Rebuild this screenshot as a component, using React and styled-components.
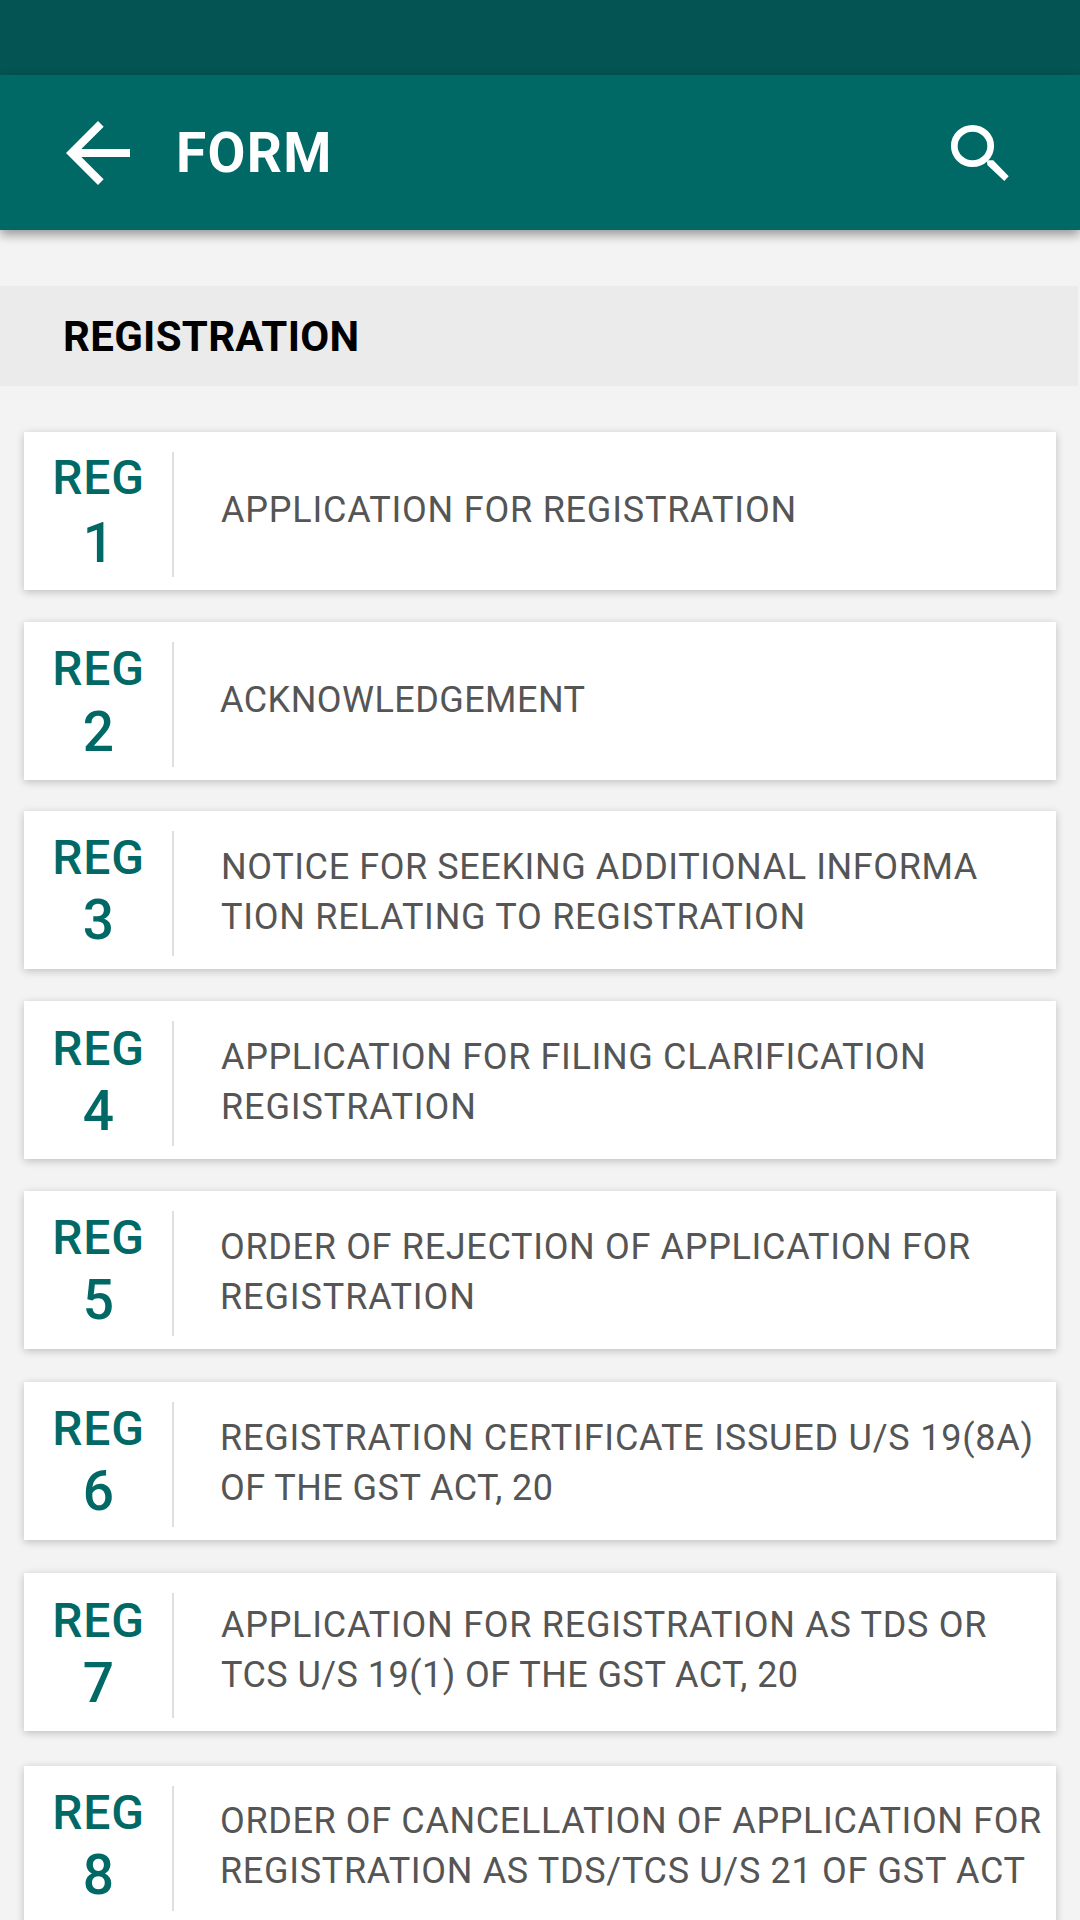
import React from "react";
import styled, { createGlobalStyle } from "styled-components";

const TEAL = "#006966";

const GlobalStyle = createGlobalStyle`
  html, body { margin: 0; background: #f3f3f3; }
  * { box-sizing: border-box; }
`;

const Screen = styled.div`
  width: 1080px;
  height: 1920px;
  overflow: hidden;
  display: flex;
  flex-direction: column;
  background: #f3f3f3;
  font-family: Roboto, "Liberation Sans", sans-serif;
`;

const StatusBar = styled.div`
  flex: none;
  height: 75px;
  background: #035452;
`;

const AppBar = styled.header`
  flex: none;
  display: flex;
  align-items: center;
  height: 155px;
  padding: 1px 61px 0 50px;
  background: ${TEAL};
  color: #fff;
  box-shadow: 0 5px 10px rgba(0, 0, 0, 0.37);
`;

const IconButton = styled.button`
  display: flex;
  padding: 0;
  border: 0;
  background: none;
  color: inherit;
`;

const Title = styled.h1`
  flex: 1;
  margin: 0 0 0 30px;
  font-size: 55px;
  font-weight: 700;
  line-height: 64px;
  letter-spacing: 1.3px;
`;

const SectionHeader = styled.h2`
  flex: none;
  width: 1078px;
  height: 100px;
  margin: 56px 0 46px;
  padding: 26px 0 0 63px;
  background: #ebebeb;
  color: #000;
  font-size: 42px;
  font-weight: 700;
  line-height: 49px;
  letter-spacing: 0.3px;
`;

const FormList = styled.ul`
  margin: 0;
  padding: 0 24px;
  list-style: none;
`;

const Card = styled.li`
  display: flex;
  height: 158px;
  margin-bottom: ${(p) => p.$gap}px;
  background: #fff;
  box-shadow: 0 2px 8px rgba(0, 0, 0, 0.22);
`;

const Code = styled.div`
  width: 148px;
  padding-top: ${(p) => p.$top}px;
  padding-left: 1px;
  display: flex;
  flex-direction: column;
  align-items: center;
  gap: ${(p) => p.$gap}px;
  color: ${TEAL};
  font-weight: 500;
`;

const Prefix = styled.span`
  font-size: 48px;
  line-height: 57px;
  letter-spacing: 0.8px;
`;

const Number = styled.span`
  font-size: 55px;
  line-height: 64px;
`;

const Divider = styled.div`
  width: 2px;
  height: 125px;
  margin-top: 20px;
  background: #dfdfdf;
`;

const Description = styled.div`
  padding-top: ${(p) => p.$top}px;
  padding-left: ${(p) => p.$indent}px;
`;

const Line = styled.div`
  height: 50px;
  color: #555;
  font-size: 36px;
  line-height: 50px;
  letter-spacing: ${(p) => p.$tracking}px;
  white-space: nowrap;
`;

const forms = [
  { gap: 32, codeTop: 17, codeGap: 5, top: 53, indent: 47, lines: [["APPLICATION FOR REGISTRATION", 0.78]] },
  { gap: 31, codeTop: 18, codeGap: 3, top: 53, indent: 46, lines: [["ACKNOWLEDGEMENT", 0.45]] },
  { gap: 32, codeTop: 18, codeGap: 2, top: 31, indent: 47, lines: [["NOTICE FOR SEEKING ADDITIONAL INFORMA", 0.59], ["TION RELATING TO REGISTRATION", 0.74]] },
  { gap: 32, codeTop: 19, codeGap: 2, top: 31, indent: 47, lines: [["APPLICATION FOR FILING CLARIFICATION", 0.65], ["REGISTRATION", 0.9]] },
  { gap: 33, codeTop: 18, codeGap: 2, top: 31, indent: 46, lines: [["ORDER OF REJECTION OF APPLICATION FOR", 0.67], ["REGISTRATION", 0.9]] },
  { gap: 33, codeTop: 18, codeGap: 2, top: 31, indent: 46, lines: [["REGISTRATION CERTIFICATE ISSUED U/S 19(8A)", 0.77], ["OF THE GST ACT, 20", 0.45]] },
  { gap: 35, codeTop: 19, codeGap: 2, top: 27, indent: 47, lines: [["APPLICATION FOR REGISTRATION AS TDS OR", 0.73], ["TCS U/S 19(1) OF THE GST ACT, 20", 0.45]] },
  { gap: 0, codeTop: 18, codeGap: 2, top: 30, indent: 46, lines: [["ORDER OF CANCELLATION OF APPLICATION FOR", 0.62], ["REGISTRATION AS TDS/TCS U/S 21 OF GST ACT", 0.68]] },
];

const BackIcon = () => (
  <svg width="96" height="96" viewBox="0 0 24 24" fill="currentColor" aria-hidden="true">
    <path d="M20 11H7.83l5.59-5.59L12 4l-8 8 8 8 1.41-1.41L7.83 13H20v-2z" />
  </svg>
);

const SearchIcon = () => (
  <svg width="76" height="76" viewBox="0 0 76 76" aria-hidden="true">
    <ellipse cx="29.5" cy="31" rx="18.2" ry="17.7" fill="none" stroke="currentColor" strokeWidth="6.7" />
    <path d="M44 45.6L46.2 45.2H50.2L65.7 61.2L61.3 66L44.3 50Z" fill="currentColor" />
  </svg>
);

export default function App() {
  return (
    <Screen>
      <GlobalStyle />
      <StatusBar />
      <AppBar>
        <IconButton aria-label="Back"><BackIcon /></IconButton>
        <Title>FORM</Title>
        <IconButton aria-label="Search"><SearchIcon /></IconButton>
      </AppBar>
      <SectionHeader>REGISTRATION</SectionHeader>
      <FormList>
        {forms.map((form, i) => (
          <Card key={i} $gap={form.gap}>
            <Code $top={form.codeTop} $gap={form.codeGap}>
              <Prefix>REG</Prefix>
              <Number>{i + 1}</Number>
            </Code>
            <Divider />
            <Description $top={form.top} $indent={form.indent}>
              {form.lines.map(([text, tracking]) => (
                <Line key={text} $tracking={tracking}>{text}</Line>
              ))}
            </Description>
          </Card>
        ))}
      </FormList>
    </Screen>
  );
}
